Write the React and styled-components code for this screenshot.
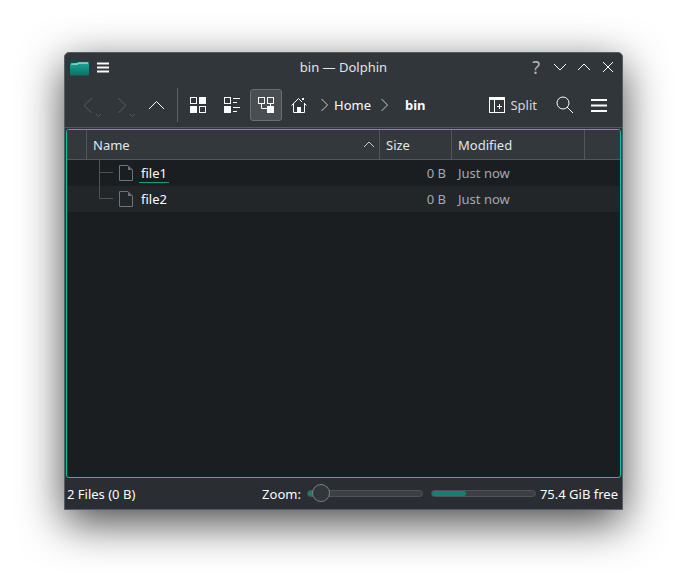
import styled, { createGlobalStyle } from "styled-components";

const GlobalStyle = createGlobalStyle`
  html, body {
    margin: 0;
    background: #ffffff;
    font-family: "Noto Sans", sans-serif;
  }
`;

const Line = ({ d, w = 16, h = 16, color = "#fcfcfc", width = 1 }) => (
  <svg width={w} height={h} viewBox={`0 0 ${w} ${h}`} fill="none" stroke={color} strokeWidth={width}>
    <path d={d} />
  </svg>
);

const FolderLogo = () => (
  <svg width="19" height="17" viewBox="0 0 19 17">
    <defs>
      <linearGradient id="folderBody" x1="0" y1="0" x2="0" y2="1">
        <stop offset="0" stopColor="#18a896" />
        <stop offset="1" stopColor="#0d6f66" />
      </linearGradient>
    </defs>
    <path d="M0 2.5 L0.8 0.5 H7 L8 2 H18 Q19 2 19 3 V5 H0 Z" fill="#0a4f4a" />
    <path d="M0 5.5 L8 3.5 H19 V15.5 Q19 16.5 18 16.5 H1 Q0 16.5 0 15.5 Z" fill="url(#folderBody)" />
    <rect x="1" y="4.5" width="7" height="1" fill="#e6f4f2" />
    <rect x="8" y="3.5" width="10" height="1" fill="#e6f4f2" />
  </svg>
);

const GridIcon = () => (
  <svg width="16" height="16" viewBox="0 0 16 16" fill="none" stroke="#fcfcfc">
    <rect x="0.5" y="0.5" width="6" height="6" />
    <rect x="9" y="0" width="7" height="7" fill="#fcfcfc" stroke="none" />
    <rect x="0" y="9" width="7" height="7" fill="#fcfcfc" stroke="none" />
    <rect x="9.5" y="9.5" width="6" height="6" />
  </svg>
);

const CompactIcon = () => (
  <svg width="16" height="16" viewBox="0 0 16 16" fill="none" stroke="#fcfcfc">
    <rect x="0.5" y="0.5" width="6" height="6" />
    <rect x="0" y="9" width="7" height="7" fill="#fcfcfc" stroke="none" />
    <path d="M9 1.5H16M9 5.5H13M9 10.5H16M9 14.5H13" />
  </svg>
);

const DetailsIcon = () => (
  <svg width="16" height="16" viewBox="0 0 16 16" fill="none" stroke="#fcfcfc">
    <rect x="0.5" y="0.5" width="6" height="6" />
    <rect x="9.5" y="0.5" width="6" height="6" />
    <path d="M3.5 6.5V11.5H9" />
    <path d="M12.5 6.5V9" />
    <rect x="9" y="9" width="7" height="7" fill="#fcfcfc" stroke="none" />
  </svg>
);

const HomeIcon = () => (
  <svg width="16" height="16" viewBox="0 0 16 16" fill="none" stroke="#fcfcfc">
    <path d="M0.5 8.5L7.5 1.5L11 5" />
    <path d="M15.5 8.5L13 6" />
    <path d="M2.5 7V15.5H13.5V7" />
    <rect x="6" y="10" width="4" height="6" fill="#fcfcfc" stroke="none" />
    <rect x="11" y="1" width="2" height="2" fill="#fcfcfc" stroke="none" />
  </svg>
);

const SplitIcon = () => (
  <svg width="16" height="16" viewBox="0 0 16 16" fill="none" stroke="#fcfcfc">
    <rect x="0.5" y="0.5" width="15" height="15" />
    <rect x="0" y="0" width="16" height="3" fill="#fcfcfc" stroke="none" />
    <path d="M5.5 3V16" />
    <path d="M8 9.5H13M10.5 7V12" />
  </svg>
);

const FileIcon = () => (
  <svg width="14" height="16" viewBox="0 0 14 16" fill="none" stroke="#6a7380">
    <path d="M0.5 0.5H9L13.5 5V15.5H0.5Z" />
    <path d="M9 1V5H13Z" fill="#6a7380" stroke="none" />
  </svg>
);

const TreeBranch = ({ last }) => (
  <svg width="20" height="26" viewBox="0 0 20 26" fill="none" stroke="#4d5257">
    <path d={last ? "M0.5 0V12.5H14" : "M0.5 0V26M0.5 12.5H14"} />
  </svg>
);

const Stage = styled.div`
  padding: 52px 64px 0;
  height: 586px;
  box-sizing: border-box;
  overflow: hidden;
`;

const Win = styled.div`
  width: 559px;
  height: 458px;
  box-sizing: border-box;
  display: flex;
  flex-direction: column;
  background: #31363b;
  border: 1px solid #565c63;
  border-radius: 5px 5px 0 0;
  box-shadow: 0 13px 44px rgba(0, 0, 0, 0.72);
  color: #fcfcfc;
  font-size: 13px;
`;

const TitleBar = styled.div`
  height: 30px;
  box-sizing: border-box;
  flex: none;
  display: grid;
  grid-template-columns: 1fr auto 1fr;
  align-items: center;
  padding: 0 5px 2px;
`;

const TitleLeft = styled.div`
  display: flex;
  align-items: center;
  gap: 8px;
`;

const TitleText = styled.div`
  color: #e3e5e7;
`;

const TitleRight = styled.div`
  display: flex;
  justify-content: flex-end;
  align-items: center;
  gap: 10px;
  padding-right: 2px;
`;

const HelpMark = styled.span`
  font-size: 18px;
  line-height: 20px;
  color: #b4b7ba;
  margin-right: 3px;
`;

const Toolbar = styled.div`
  height: 44px;
  flex: none;
  display: flex;
  align-items: center;
  padding: 0 7px;
  border-bottom: 1px solid #53575b;
`;

const ToolButton = styled.div`
  position: relative;
  width: 32px;
  height: 32px;
  margin-left: ${(p) => p.$ml || 0}px;
  box-sizing: border-box;
  display: flex;
  align-items: center;
  justify-content: center;
  border-radius: 3px;
  border: 1px solid ${(p) => (p.$active ? "#6a6f74" : "transparent")};
  background: ${(p) => (p.$active ? "#4a4e53" : "transparent")};
`;

const MenuArrow = styled.span`
  position: absolute;
  right: 1px;
  bottom: 2px;
  display: flex;
`;

const Separator = styled.div`
  width: 1px;
  height: 34px;
  margin: 0 4px 0 5px;
  background: #5b5f63;
`;

const Crumb = styled.span`
  font-weight: ${(p) => (p.$bold ? 700 : 400)};
  margin-left: ${(p) => p.$ml || 0}px;
`;

const Chevron = styled.span`
  display: flex;
  margin-left: ${(p) => p.$ml || 0}px;
`;

const SplitButton = styled.div`
  display: flex;
  align-items: center;
  gap: 5px;
  margin-left: auto;
  margin-right: 12px;
  color: #d5d7d9;
`;

const Frame = styled.div`
  flex: 1;
  margin: 1px 1px 0;
  display: flex;
  flex-direction: column;
  background: #1b1e20;
  border: 1px solid #00c8a8;
  border-radius: 3px;
  overflow: hidden;
`;

const Header = styled.div`
  height: 30px;
  box-sizing: border-box;
  flex: none;
  display: flex;
  background: #33383d;
  border-bottom: 1px solid #53575b;
`;

const HeadCell = styled.div`
  width: ${(p) => p.$w}px;
  flex: ${(p) => (p.$grow ? 1 : "none")};
  box-sizing: border-box;
  padding: 0 6px;
  display: flex;
  align-items: center;
  justify-content: space-between;
  border-right: ${(p) => (p.$grow ? "none" : "1px solid #53575b")};
  color: #e3e5e7;
`;

const SortArrow = styled.span`
  display: flex;
  margin-right: -2px;
`;

const Row = styled.div`
  height: 26px;
  flex: none;
  display: flex;
  align-items: center;
  background: ${(p) => (p.$alt ? "#232629" : "#1b1e20")};
`;

const NameCell = styled.div`
  width: 313px;
  display: flex;
  align-items: center;
  padding-left: 32px;
  box-sizing: border-box;
`;

const TreeSlot = styled.div`
  width: 20px;
  height: 26px;
`;

const FileName = styled.span`
  margin-left: 6px;
  padding: 0 2px;
  line-height: 17px;
  margin-top: 1px;
  border-bottom: 1px solid ${(p) => (p.$focus ? "#0fa08c" : "transparent")};
`;

const SizeCell = styled.div`
  width: 66px;
  text-align: right;
  color: #a1a9b1;
`;

const DateCell = styled.div`
  margin-left: 12px;
  color: #a1a9b1;
`;

const StatusBar = styled.div`
  height: 31px;
  flex: none;
  display: flex;
  align-items: center;
  padding: 0 4px 0 2px;
  background: #2a2e32;
`;

const ZoomLabel = styled.span`
  margin-left: auto;
`;

const SliderWrap = styled.div`
  position: relative;
  width: 116px;
  height: 7px;
  margin-left: 6px;
  box-sizing: border-box;
  background: #3c4045;
  border: 1px solid #4f5358;
  border-radius: 4px;
`;

const SliderFill = styled.div`
  width: 5px;
  height: 100%;
  background: #148072;
  border-radius: 3px;
`;

const Knob = styled.div`
  position: absolute;
  left: 4px;
  top: -7px;
  width: 18px;
  height: 18px;
  box-sizing: border-box;
  border-radius: 50%;
  background: #31363b;
  border: 1px solid #7b7f83;
`;

const Capacity = styled.div`
  width: 105px;
  height: 7px;
  margin: 0 4px 0 8px;
  box-sizing: border-box;
  background: #3c4045;
  border: 1px solid #4f5358;
  border-radius: 4px;
`;

const CapacityFill = styled.div`
  height: 100%;
  background: #148072;
  border-radius: 3px;
`;

const files = [
  { name: "file1", focus: true },
  { name: "file2", alt: true, last: true },
];

const App = () => {
  return (
    <Stage>
      <GlobalStyle />
      <Win>
        <TitleBar>
          <TitleLeft>
            <FolderLogo />
            <Line d="M0 1.5H12M0 5.5H12M0 9.5H12" w={12} h={11} width={2} />
          </TitleLeft>
          <TitleText>bin — Dolphin</TitleText>
          <TitleRight>
            <HelpMark>?</HelpMark>
            <Line d="M1 3L7 9L13 3" w={14} h={12} />
            <Line d="M1 9L7 3L13 9" w={14} h={12} />
            <Line d="M2 1L12 11M12 1L2 11" w={14} h={12} />
          </TitleRight>
        </TitleBar>
        <Toolbar>
          <ToolButton>
            <Line d="M9 1L1 8.5L9 16" w={10} h={17} color="#565a5e" />
            <MenuArrow>
              <Line d="M1 1L3.5 3.5L6 1" w={7} h={5} color="#565a5e" />
            </MenuArrow>
          </ToolButton>
          <ToolButton $ml={2}>
            <Line d="M1 1L9 8.5L1 16" w={10} h={17} color="#565a5e" />
            <MenuArrow>
              <Line d="M1 1L3.5 3.5L6 1" w={7} h={5} color="#565a5e" />
            </MenuArrow>
          </ToolButton>
          <ToolButton $ml={2}>
            <Line d="M1 9L8.5 1.5L16 9" w={17} h={10} />
          </ToolButton>
          <Separator />
          <ToolButton>
            <GridIcon />
          </ToolButton>
          <ToolButton $ml={2}>
            <CompactIcon />
          </ToolButton>
          <ToolButton $ml={2} $active>
            <DetailsIcon />
          </ToolButton>
          <ToolButton $ml={1}>
            <HomeIcon />
          </ToolButton>
          <Chevron $ml={6}>
            <Line d="M0.5 1L6.5 7L0.5 13" w={8} h={14} color="#c8cacc" />
          </Chevron>
          <Crumb $ml={5}>Home</Crumb>
          <Chevron $ml={10}>
            <Line d="M0.5 1L6.5 7L0.5 13" w={8} h={14} color="#c8cacc" />
          </Chevron>
          <Crumb $ml={16} $bold>
            bin
          </Crumb>
          <SplitButton>
            <SplitIcon />
            Split
          </SplitButton>
          <ToolButton>
            <Line d="M1 7A6 6 0 1 0 13 7A6 6 0 1 0 1 7M11 11L17 17" w={18} h={18} />
          </ToolButton>
          <ToolButton $ml={2}>
            <Line d="M0 2H16M0 7.5H16M0 13H16" w={16} h={15} width={2} />
          </ToolButton>
        </Toolbar>
        <Frame>
          <Header>
            <HeadCell $w={20} />
            <HeadCell $w={293}>
              Name
              <SortArrow>
                <Line d="M1 6L6 1L11 6" w={12} h={7} color="#c8cacc" />
              </SortArrow>
            </HeadCell>
            <HeadCell $w={72}>Size</HeadCell>
            <HeadCell $w={133}>Modified</HeadCell>
            <HeadCell $grow />
          </Header>
          {files.map((f) => (
            <Row key={f.name} $alt={f.alt}>
              <NameCell>
                <TreeSlot>
                  <TreeBranch last={f.last} />
                </TreeSlot>
                <FileIcon />
                <FileName $focus={f.focus}>{f.name}</FileName>
              </NameCell>
              <SizeCell>0 B</SizeCell>
              <DateCell>Just now</DateCell>
            </Row>
          ))}
        </Frame>
        <StatusBar>
          2 Files (0 B)
          <ZoomLabel>Zoom:</ZoomLabel>
          <SliderWrap>
            <SliderFill />
            <Knob />
          </SliderWrap>
          <Capacity>
            <CapacityFill style={{ width: `${(35 / 105) * 100}%` }} />
          </Capacity>
          75.4 GiB free
        </StatusBar>
      </Win>
    </Stage>
  );
};

export default App;
